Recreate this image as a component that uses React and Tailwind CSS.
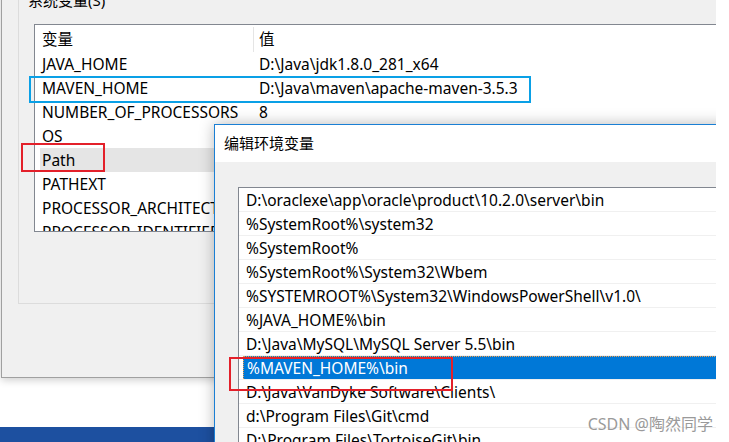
import React from 'react'

const FONT = "font-['Noto_Sans','Noto_Sans_CJK_SC',sans-serif]"

const SYS_VARS = [
  ['JAVA_HOME', 'D:\\Java\\jdk1.8.0_281_x64'],
  ['MAVEN_HOME', 'D:\\Java\\maven\\apache-maven-3.5.3'],
  ['NUMBER_OF_PROCESSORS', '8'],
  ['OS', 'Windows_NT'],
  ['Path', 'C:\\Windows\\system32'],
  ['PATHEXT', '.COM;.EXE;.BAT'],
  ['PROCESSOR_ARCHITECTURE', 'AMD64'],
  ['PROCESSOR_IDENTIFIER', 'Intel64 Family 6'],
]

const PATHS = [
  'D:\\oraclexe\\app\\oracle\\product\\10.2.0\\server\\bin',
  '%SystemRoot%\\system32',
  '%SystemRoot%',
  '%SystemRoot%\\System32\\Wbem',
  '%SYSTEMROOT%\\System32\\WindowsPowerShell\\v1.0\\',
  '%JAVA_HOME%\\bin',
  'D:\\Java\\MySQL\\MySQL Server 5.5\\bin',
  '%MAVEN_HOME%\\bin',
  'D:\\Java\\VanDyke Software\\Clients\\',
  'd:\\Program Files\\Git\\cmd',
  'D:\\Program Files\\TortoiseGit\\bin',
]

function BackWindow() {
  return (
    <div className="absolute left-[1px] top-[-40px] h-[418px] w-[800px] border border-[#a0a0a0] bg-[#f0f0f0] shadow-[0_2px_8px_rgba(0,0,0,0.2)]">
      <div className="relative ml-[16px] mt-[38px] h-[305px] w-[770px] border border-[#dcdcdc]">
        <span className="absolute left-[8px] top-[-10px] bg-[#f0f0f0] px-[1px] text-[15px] leading-[20px] text-black">
          系统变量(S)
        </span>
        <div className="ml-[15px] mt-[24px] h-[208px] w-[740px] overflow-hidden border border-[#828790] bg-white">
          <div className="flex h-[27px] items-center pt-[2px] text-[15.5px] text-black">
            <div className="w-[218px] shrink-0 pl-[7px]">变量</div>
            <div className="h-[25px] border-l border-[#e5e5e5]" />
            <div className="pl-[5px]">值</div>
          </div>
          {SYS_VARS.map(([name, value]) => (
            <div
              key={name}
              className={`ml-[5px] flex h-[24px] items-center pt-[2px] text-[15.5px] text-black ${
                name === 'Path' ? 'bg-[#e5e5e5]' : ''
              }`}
            >
              <div className="w-[213px] shrink-0 overflow-hidden whitespace-nowrap pl-[2px]">{name}</div>
              <div className="whitespace-nowrap pl-[6px]">{value}</div>
            </div>
          ))}
        </div>
      </div>
    </div>
  )
}

function EditWindow() {
  return (
    <div className="absolute left-[214px] top-[124px] h-[340px] w-[540px] border border-[#1a7fd4] bg-[#f0f0f0] shadow-[0_0_14px_rgba(0,0,0,0.28)]">
      <div className="flex h-[37px] items-center bg-white pl-[9px] text-[15px] text-black">编辑环境变量</div>
      <div className="pl-[23px] pt-[25px]">
        <div className="w-[520px] border border-[#828790] bg-white">
          {PATHS.map((p) => {
            const selected = p === '%MAVEN_HOME%\\bin'
            return (
              <div key={p} className="flex h-[24px] border-b border-[#f0f0f0]">
                <div
                  className={`ml-[4px] flex flex-1 items-center whitespace-nowrap pl-[3px] pt-[2px] text-[15.5px] ${
                    selected
                      ? 'border-l border-t border-dotted border-[#f0a050] bg-[#0078d7] pl-[2px] text-white'
                      : 'text-black'
                  }`}
                >
                  {p}
                </div>
              </div>
            )
          })}
        </div>
      </div>
    </div>
  )
}

export default function App() {
  return (
    <div className={`relative h-[442px] w-[729px] overflow-hidden bg-white ${FONT}`}>
      <div className="relative h-[442px] w-[716px] overflow-hidden bg-white">
        <div className="absolute left-0 top-[427px] h-[15px] w-full bg-[#1d50a0]" />
        <BackWindow />
        <EditWindow />

        <div className="absolute right-[3px] top-[413px] text-[16px] leading-[22px] text-[#9a9a9a]">
          CSDN @陶然同学
        </div>

        <div className="absolute left-[29px] top-[76px] h-[27px] w-[502px] border-2 border-[#0aa0e6]" />
        <div className="absolute left-[21px] top-[143px] h-[29px] w-[84px] border-2 border-[#e3202a]" />
        <div className="absolute left-[229px] top-[357px] h-[34px] w-[224px] border-2 border-[#e3202a]" />
      </div>
    </div>
  )
}
